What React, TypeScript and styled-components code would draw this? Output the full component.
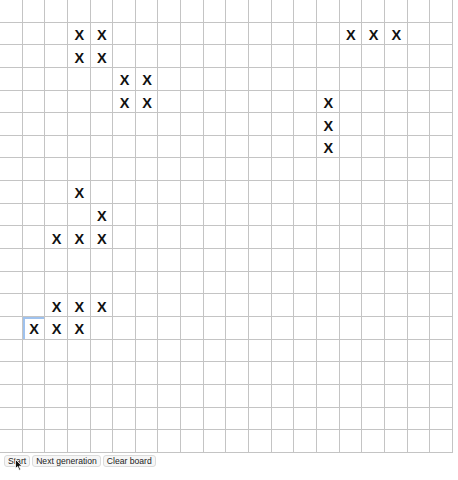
import React from 'react';
import styled, { createGlobalStyle } from 'styled-components';

const SIZE = 20;
const CELL = 22.65;

const live: [number, number][] = [
  [1, 3], [1, 4], [1, 15], [1, 16], [1, 17],
  [2, 3], [2, 4],
  [3, 5], [3, 6],
  [4, 5], [4, 6], [4, 14],
  [5, 14],
  [6, 14],
  [8, 3],
  [9, 4],
  [10, 2], [10, 3], [10, 4],
  [13, 2], [13, 3], [13, 4],
  [14, 1], [14, 2], [14, 3],
];

const focused = '14-1';

const GlobalStyle = createGlobalStyle`
  html, body {
    margin: 0;
    padding: 0;
    background: #ffffff;
  }
  body {
    font-family: "Liberation Sans", Arial, sans-serif;
  }
`;

const Page = styled.div`
  position: relative;
  width: 458px;
  height: 480px;
  overflow: hidden;
`;

const Board = styled.div`
  display: grid;
  grid-template-columns: repeat(${SIZE}, ${CELL}px);
  grid-auto-rows: ${CELL}px;
  width: ${SIZE * CELL}px;
`;

const Cell = styled.div<{ $focus?: boolean }>`
  box-sizing: border-box;
  display: flex;
  align-items: center;
  justify-content: center;
  border-right: 1px solid #c4c4c4;
  border-bottom: 1px solid #c4c4c4;
  font-family: "Liberation Sans", Arial, sans-serif;
  font-weight: 700;
  font-size: 14.5px;
  color: #111;
  padding-left: 1px;
  padding-top: 3px;
  ${(p) =>
    p.$focus &&
    `
    box-shadow: inset 2px 2px 0 #9fc2ee;
  `}
`;

const Controls = styled.div`
  display: flex;
  gap: 2px;
  padding: 2px 0 0 4px;
`;

const Button = styled.button`
  font-family: "Liberation Sans", Arial, sans-serif;
  font-size: 8.6px;
  line-height: 9px;
  height: 12px;
  padding: 1px 3px 0;
  margin: 0;
  color: #222;
  background: #f6f6f6;
  border: 1px solid #dcdcdc;
  border-radius: 3px;
`;

const Cursor = styled.svg`
  position: absolute;
  left: 15px;
  top: 459px;
`;

export default function App() {
  const alive = new Set(live.map(([r, c]) => `${r}-${c}`));
  const cells = [];
  for (let r = 0; r < SIZE; r++) {
    for (let c = 0; c < SIZE; c++) {
      const key = `${r}-${c}`;
      cells.push(
        <Cell key={key} $focus={key === focused}>
          {alive.has(key) ? 'X' : ''}
        </Cell>
      );
    }
  }

  return (
    <Page>
      <GlobalStyle />
      <Board>{cells}</Board>
      <Controls>
        <Button>Start</Button>
        <Button>Next generation</Button>
        <Button>Clear board</Button>
      </Controls>
      <Cursor width="8" height="12" viewBox="0 0 8 12">
        <path d="M0.5 0.5 L0.5 9.5 L2.6 7.6 L4.2 11.2 L5.6 10.6 L4.1 7.1 L7 7.1 Z" fill="#111" stroke="#fff" strokeWidth="0.8" />
      </Cursor>
    </Page>
  );
}
